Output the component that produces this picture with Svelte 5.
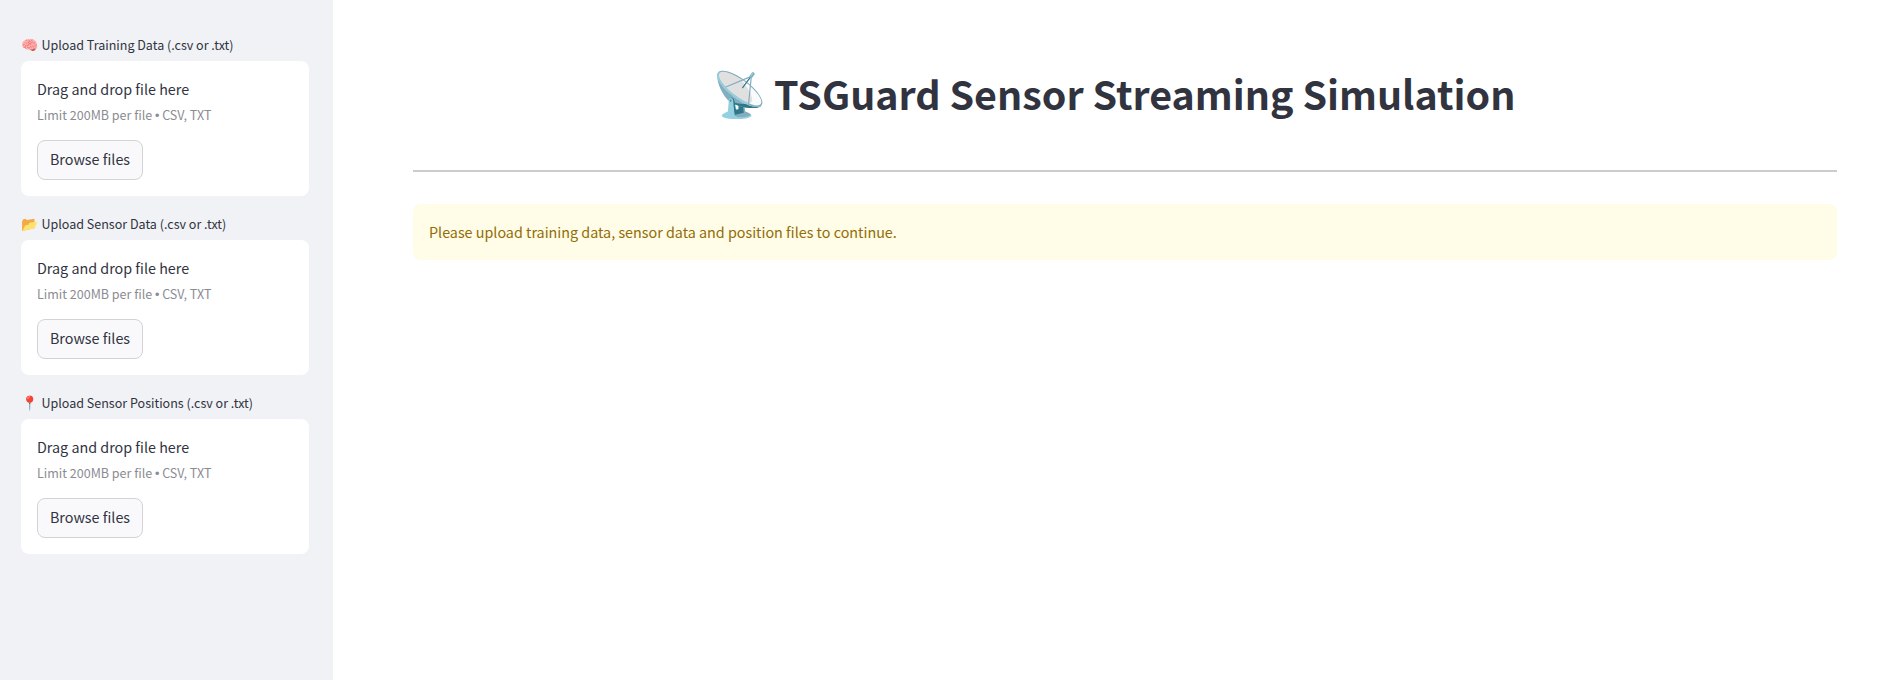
<script>
  const uploads = [
    { icon: '🧠', label: 'Upload Training Data (.csv or .txt)' },
    { icon: '📂', label: 'Upload Sensor Data (.csv or .txt)' },
    { icon: '📍', label: 'Upload Sensor Positions (.csv or .txt)' }
  ];
</script>

<div class="app">
  <aside>
    {#each uploads as item}
      <section class="uploader">
        <div class="label"><span class="emoji">{item.icon}</span><span>{item.label}</span></div>
        <div class="dropzone">
          <div class="primary">Drag and drop file here</div>
          <div class="hint">Limit 200MB per file <span class="bullet">•</span> CSV, TXT</div>
          <button type="button"><span>Browse files</span></button>
        </div>
      </section>
    {/each}
  </aside>
  <main>
    <h1><span class="emoji">📡</span><span class="title">TSGuard Sensor Streaming Simulation</span></h1>
    <hr />
    <div class="alert">Please upload training data, sensor data and position files to continue.</div>
  </main>
</div>

<style>
  :global(body) { margin: 0; }
  .app {
    display: flex;
    height: 680px;
    background: #fff;
    color: #31333f;
    font-family: "Source Sans Pro", "Noto Sans CJK SC", sans-serif;
    font-size: 14.33px;
    overflow: hidden;
  }
  aside {
    box-sizing: border-box;
    width: 333px;
    flex: none;
    padding: 33px 24px 0 21px;
    background: #f0f2f6;
    display: flex;
    flex-direction: column;
    gap: 16px;
  }
  .uploader { height: 163px; white-space: nowrap; }
  .label {
    display: flex;
    align-items: center;
    height: 24px;
    margin-bottom: 4px;
    font-size: 12.53px;
    line-height: 24px;
  }
  .label .emoji { width: 20.5px; font-size: 14px; }
  .emoji { font-family: "Noto Color Emoji", sans-serif; flex: none; }
  .dropzone {
    box-sizing: border-box;
    width: 288px;
    height: 135px;
    padding: 16px;
    border-radius: 8px;
    background: #fff;
  }
  .primary { height: 26px; line-height: 24px; }
  .hint { height: 24px; line-height: 24px; font-size: 12.53px; color: #8b8c93; }
  .bullet { font-family: "Liberation Sans", sans-serif; line-height: 0; }
  button {
    box-sizing: border-box;
    display: flex;
    align-items: center;
    justify-content: center;
    width: 106px;
    height: 40px;
    margin: 13px 0 0;
    padding: 0 0 2px;
    border: 1px solid #d2d3d7;
    border-radius: 8px;
    background: #f9f9fb;
    color: inherit;
    font: inherit;
    line-height: 24px;
  }
  main { flex: 1; padding: 60px 45px 0 80px; }
  h1 {
    display: flex;
    align-items: center;
    justify-content: center;
    box-sizing: border-box;
    height: 70px;
    margin: 0 0 40px;
    padding-right: 22.5px;
    font-size: 39.4px;
    line-height: 70px;
    font-weight: 700;
    white-space: nowrap;
  }
  h1 .emoji { width: 62px; font-size: 44px; font-weight: 400; }
  .title { margin-bottom: 4px; }
  hr { height: 2px; margin: 0 0 32px; border: 0; background: #ccc; }
  .alert {
    box-sizing: border-box;
    height: 56px;
    padding: 16px;
    border-radius: 8px;
    background: #fffce7;
    color: #926c05;
    line-height: 24px;
  }
</style>
